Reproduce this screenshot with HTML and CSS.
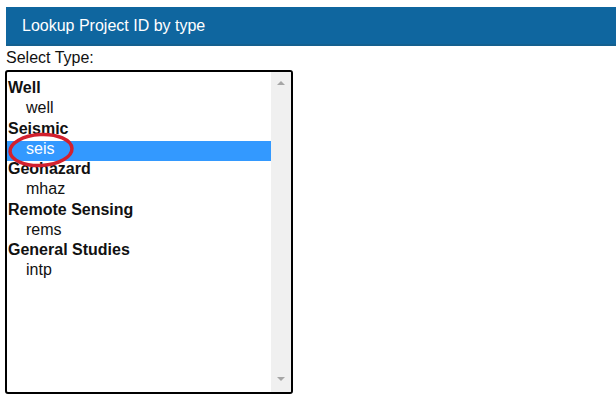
FILE: index.html
```html
<!DOCTYPE html>
<html lang="en">
<head>
<meta charset="utf-8">
<title>Lookup Project ID by type</title>
<link rel="stylesheet" href="styles.css">
</head>
<body>
<div class="page">
  <div class="header">Lookup Project ID by type</div>
  <div class="label">Select Type:</div>
  <div class="listbox" role="listbox">
    <div class="list">
      <div class="group">Well</div>
      <div class="option">well</div>
      <div class="group">Seismic</div>
      <div class="option selected">seis
        <svg class="circle" width="74" height="40" viewBox="0 0 74 40">
          <ellipse cx="37" cy="20" rx="31" ry="15.5" fill="none" stroke="#d2202e" stroke-width="3.5" transform="rotate(-3 37 20)"/>
        </svg>
      </div>
      <div class="group">Geohazard</div>
      <div class="option">mhaz</div>
      <div class="group">Remote Sensing</div>
      <div class="option">rems</div>
      <div class="group">General Studies</div>
      <div class="option">intp</div>
    </div>
    <div class="scrollbar">
      <div class="arrow up"></div>
      <div class="arrow down"></div>
    </div>
  </div>
</div>
</body>
</html>
```

FILE: styles.css
```css
html, body {
  margin: 0;
  padding: 0;
  background: #ffffff;
}

body {
  font-family: "Liberation Sans", Arial, sans-serif;
  font-size: 16px;
  color: #111111;
}

.page {
  padding-top: 7px;
}

.header {
  margin-left: 6px;
  height: 37px;
  line-height: 37px;
  padding-left: 16px;
  background: #0f669f;
  border-bottom: 2px solid #14608f;
  color: #ffffff;
  font-size: 16px;
}

.label {
  margin: 3px 0 0 6px;
  line-height: 18px;
}

.listbox {
  margin: 3px 0 0 5px;
  width: 284px;
  height: 320px;
  border: 2px solid #000000;
  border-radius: 3px;
  display: flex;
  overflow: hidden;
}

.list {
  flex: 1;
  padding-top: 8px;
}

.group,
.option {
  height: 20.25px;
  line-height: 16px;
  white-space: nowrap;
}

.group {
  font-weight: bold;
  padding-left: 1px;
}

.option {
  padding-left: 19px;
}

.option.selected {
  position: relative;
  background: #3399ff;
  color: #ffffff;
}

.circle {
  position: absolute;
  left: -3px;
  top: -11px;
}

.scrollbar {
  width: 20px;
  background: #f0f0f0;
  display: flex;
  flex-direction: column;
  justify-content: space-between;
  align-items: center;
  padding: 9px 0 11px;
}

.arrow {
  width: 0;
  height: 0;
  border-left: 4px solid transparent;
  border-right: 4px solid transparent;
}

.arrow.up {
  border-bottom: 4px solid #a6a6a6;
}

.arrow.down {
  border-top: 4px solid #a6a6a6;
}
```
